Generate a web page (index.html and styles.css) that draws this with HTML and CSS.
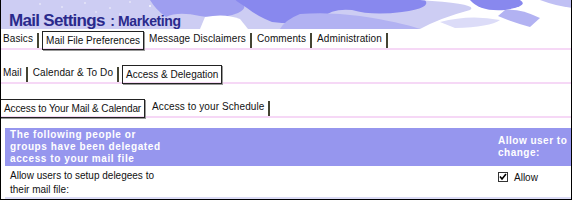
FILE: index.html
```html
<!DOCTYPE html>
<html>
<head>
<meta charset="utf-8">
<link rel="stylesheet" href="styles.css">
</head>
<body>
<div class="page">
  <header class="banner">
    <svg class="banner-art" width="572" height="29" viewBox="0 0 572 29" xmlns="http://www.w3.org/2000/svg">
      <rect x="0" y="0" width="572" height="29" fill="#cdcdf3"/>
      <g fill="#ffffff" opacity="0.85">
        <circle cx="40" cy="4" r="0.8"/><circle cx="62" cy="7" r="0.8"/><circle cx="85" cy="3" r="0.8"/>
        <circle cx="110" cy="8" r="0.8"/><circle cx="130" cy="2" r="0.8"/><circle cx="150" cy="6" r="1"/>
        <circle cx="96" cy="12" r="0.7"/><circle cx="72" cy="14" r="0.7"/><circle cx="120" cy="14" r="0.7"/>
        <circle cx="160" cy="10" r="0.7"/><circle cx="175" cy="4" r="0.7"/>
      </g>
      <path d="M150 0 L235 0 Q252 6 238 13 Q220 20 200 16 Q178 11 166 17 Q156 10 150 0 Z" fill="#9e9ef0"/>
      <path d="M205 17 Q225 13 240 19 L248 29 L200 29 Z" fill="#ffffff"/>
      <path d="M235 0 L425 0 Q432 8 402 12 Q372 16 352 10 Q332 8 322 18 Q302 26 272 22 Q257 16 247 8 Z" fill="#8888ee"/>
      <path d="M300 14 Q330 12 360 16 Q400 22 420 29 L280 29 Q285 20 300 14 Z" fill="#b2b2f2"/>
      <path d="M420 0 L572 0 L572 29 L420 29 Q440 18 470 10 Q480 4 420 0 Z" fill="#ffffff"/>
      <path d="M470 0 L520 0 Q530 6 505 10 Q480 12 470 0 Z" fill="#8888ee"/>
      <path d="M505 10 Q520 8 540 18 L530 27 Q512 22 498 16 Z" fill="#b2b2f2"/>
      <path d="M540 0 L572 0 L572 8 Q556 6 540 0 Z" fill="#c0c0f4"/>
      <path d="M440 22 Q470 14 500 20 Q490 27 455 28 Z" fill="#dcdcf8"/>
    </svg>
    <h1 class="title"><span class="title-main">Mail Settings</span> <span class="title-sub">: Marketing</span></h1>
  </header>

  <nav class="tabs tabs-top">
    <span class="tab">Basics</span>
    <span class="tab tab-on">Mail File Preferences</span>
    <span class="tab">Message Disclaimers</span>
    <span class="tab">Comments</span>
    <span class="tab">Administration</span>
  </nav>

  <nav class="tabs tabs-mid">
    <span class="tab">Mail</span>
    <span class="tab">Calendar &amp; To Do</span>
    <span class="tab tab-on">Access &amp; Delegation</span>
  </nav>

  <nav class="tabs tabs-sub">
    <span class="tab tab-on">Access to Your Mail &amp; Calendar</span>
    <span class="tab">Access to your Schedule</span>
  </nav>

  <table class="deleg">
    <tr class="deleg-head">
      <th class="col-left">The following people or<br>groups have been delegated<br>access to your mail file</th>
      <th class="col-right">Allow user to<br>change:</th>
    </tr>
    <tr class="deleg-row">
      <td class="col-left">Allow users to setup delegees to<br>their mail file:</td>
      <td class="col-right"><span class="check"><svg width="10" height="10" viewBox="0 0 10 10"><rect x="0.5" y="0.5" width="9" height="9" fill="#fff" stroke="#333"/><path d="M2 4.5 L4 7 L8 2" fill="none" stroke="#000" stroke-width="1.6"/></svg></span>Allow</td>
    </tr>
  </table>
</div>
</body>
</html>
```

FILE: styles.css
```css
html, body {
  margin: 0;
  padding: 0;
  background: #ffffff;
}
.page {
  width: 570px;
  height: 199px;
  border-left: 1px solid #000;
  border-right: 1px solid #000;
  border-bottom: 1px solid #000;
  font-family: "Liberation Sans", Arial, sans-serif;
  font-size: 10px;
  color: #111;
  overflow: hidden;
}
.banner {
  display: grid;
  height: 29px;
  margin-left: -1px;
}
.banner-art, .title {
  grid-area: 1 / 1;
}
.title {
  margin: 0;
  padding: 9px 0 0 9px;
  color: #2a2a8c;
  font-weight: bold;
  white-space: nowrap;
  line-height: 20px;
}
.title-main {
  font-size: 17px;
  letter-spacing: -0.7px;
}
.title-sub {
  font-size: 14px;
  letter-spacing: -0.4px;
}

.tabs {
  display: flex;
  align-items: flex-end;
  border-bottom: 2px solid #f6d8f6;
  height: 18px;
}
.tab {
  padding: 0 4px 3px 2px;
  border-right: 2px solid #444433;
  line-height: 12px;
  white-space: nowrap;
  margin-right: 3px;
  letter-spacing: 0.1px;
}
.tab-on {
  border: 1px solid #222;
  box-shadow: 1px 1px 0 #999;
  padding: 3px 3px 2px 3px;
  margin-bottom: -2px;
  letter-spacing: 0;
}
.tabs-top { margin-top: 1px; }
.tabs-mid { margin-top: 14px; }
.tabs-sub { margin-top: 14px; }
.tabs-sub .tab-on {
  margin-left: -1px;
  margin-right: 5px;
  letter-spacing: -0.1px;
}

.deleg {
  margin: 10px 0 0 4px;
  width: 566px;
  border-collapse: collapse;
}
.deleg-head th {
  background: #9696ee;
  color: #ffffff;
  font-weight: bold;
  text-align: left;
  vertical-align: top;
  line-height: 12px;
  padding: 1px 0 1px 5px;
  letter-spacing: 0.6px;
}
.deleg-head .col-right {
  vertical-align: middle;
  letter-spacing: 0.5px;
}
.deleg-row td {
  line-height: 14px;
  padding: 3px 0 0 5px;
  border-bottom: 2px solid #dcdcf6;
  vertical-align: top;
}
.deleg-row .col-right {
  padding-top: 5px;
}
.col-right {
  width: 73px;
}
.check {
  display: inline-block;
  vertical-align: -1px;
  margin-right: 6px;
  line-height: 0;
}
```
